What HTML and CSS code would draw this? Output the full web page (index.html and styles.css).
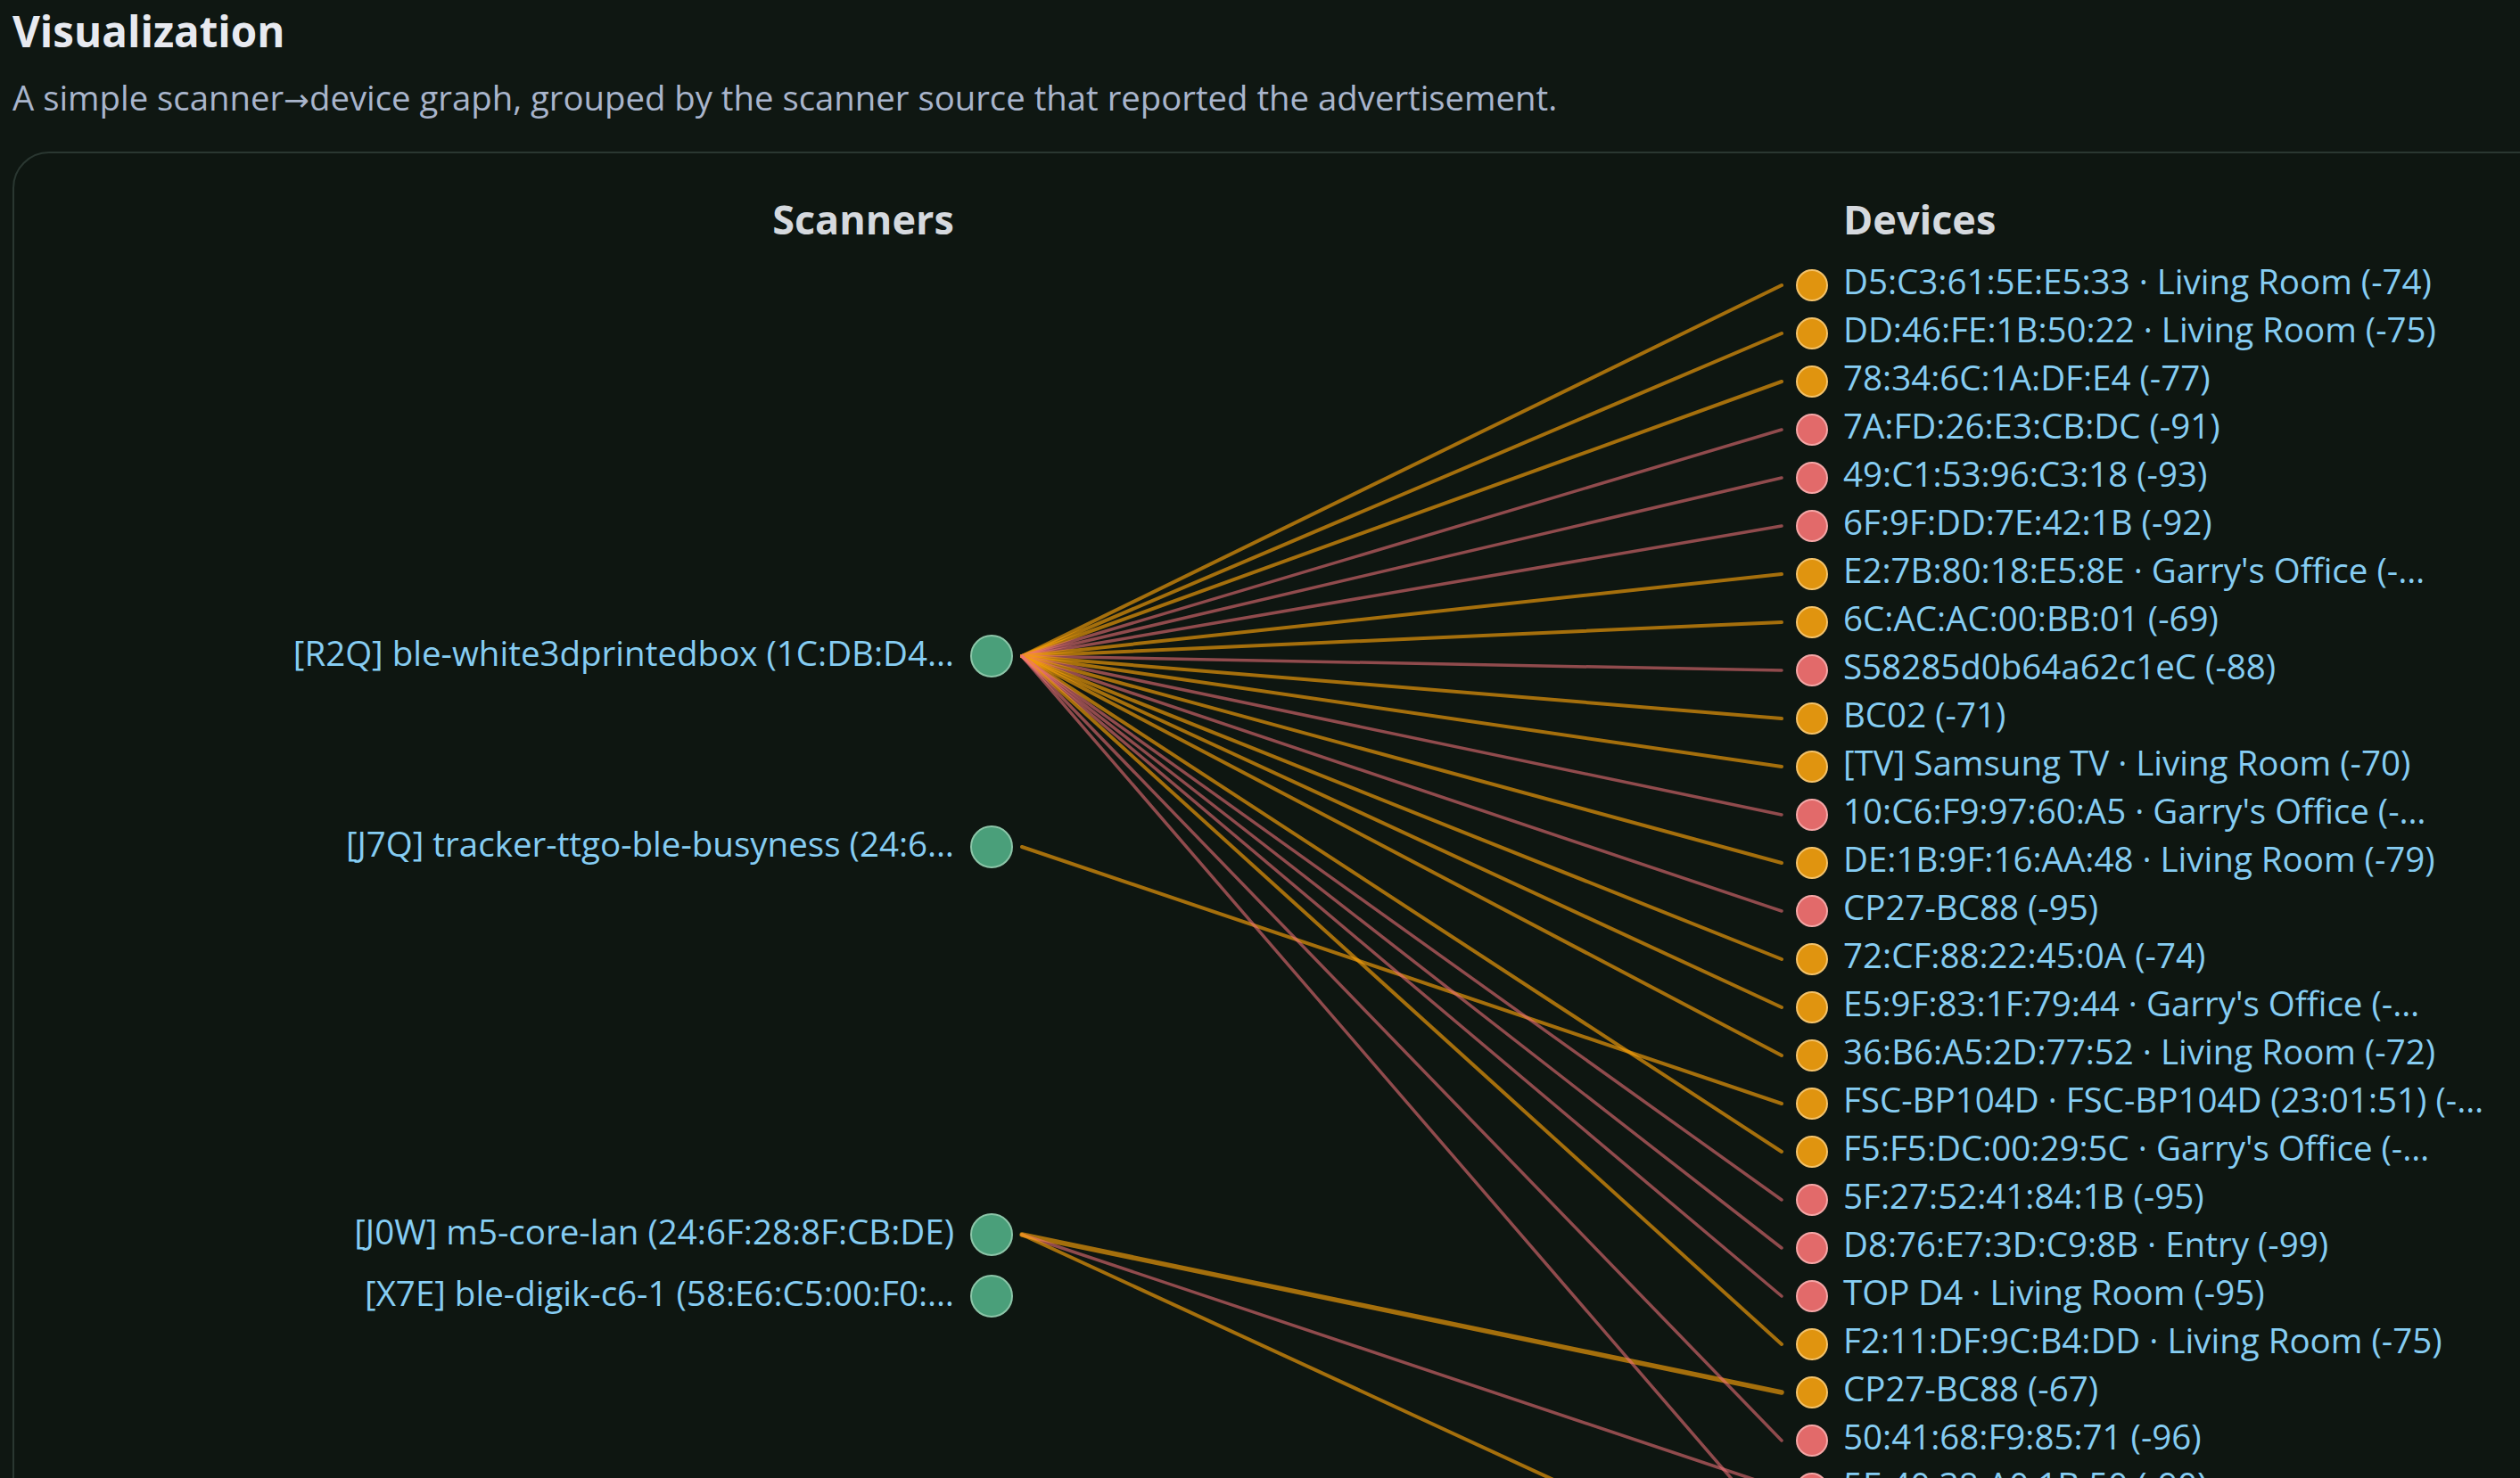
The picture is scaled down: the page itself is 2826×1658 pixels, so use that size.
FILE: index.html
```html
<!DOCTYPE html>
<html lang="en">
<head>
<meta charset="utf-8">
<title>Visualization</title>
<link rel="stylesheet" href="styles.css">
</head>
<body>
<main class="page">
  <h2 class="title">Visualization</h2>
  <p class="subtitle">A simple scanner<span class="arrow">→</span>device graph, grouped by the scanner source that reported the advertisement.</p>
  <section class="card">
    <svg class="graph" width="2900" height="1700" viewBox="16 172 2900 1700" xmlns="http://www.w3.org/2000/svg">
      <text class="hdr" x="968" y="263" text-anchor="middle">Scanners</text>
      <text class="hdr" x="2067" y="263">Devices</text>

      <g class="edges">
        <line class="edge-o" x1="1146" y1="736" x2="1998" y2="320"/>
        <line class="edge-o" x1="1146" y1="736" x2="1998" y2="374"/>
        <line class="edge-o" x1="1146" y1="736" x2="1998" y2="428"/>
        <line class="edge-r" x1="1146" y1="736" x2="1998" y2="482"/>
        <line class="edge-r" x1="1146" y1="736" x2="1998" y2="536"/>
        <line class="edge-r" x1="1146" y1="736" x2="1998" y2="590"/>
        <line class="edge-o" x1="1146" y1="736" x2="1998" y2="644"/>
        <line class="edge-o" x1="1146" y1="736" x2="1998" y2="698"/>
        <line class="edge-r" x1="1146" y1="736" x2="1998" y2="752"/>
        <line class="edge-o" x1="1146" y1="736" x2="1998" y2="806"/>
        <line class="edge-o" x1="1146" y1="736" x2="1998" y2="860"/>
        <line class="edge-r" x1="1146" y1="736" x2="1998" y2="914"/>
        <line class="edge-o" x1="1146" y1="736" x2="1998" y2="968"/>
        <line class="edge-r" x1="1146" y1="736" x2="1998" y2="1022"/>
        <line class="edge-o" x1="1146" y1="736" x2="1998" y2="1076"/>
        <line class="edge-o" x1="1146" y1="736" x2="1998" y2="1130"/>
        <line class="edge-o" x1="1146" y1="736" x2="1998" y2="1184"/>
        <line class="edge-o" x1="1146" y1="950" x2="1998" y2="1238"/>
        <line class="edge-o" x1="1146" y1="736" x2="1998" y2="1292"/>
        <line class="edge-r" x1="1146" y1="736" x2="1998" y2="1346"/>
        <line class="edge-r" x1="1146" y1="736" x2="1998" y2="1400"/>
        <line class="edge-r" x1="1146" y1="736" x2="1998" y2="1454"/>
        <line class="edge-o" x1="1146" y1="736" x2="1998" y2="1508"/>
        <line class="edge-o edge-strong" x1="1146" y1="1385" x2="1998" y2="1562"/>
        <line class="edge-r" x1="1146" y1="736" x2="1998" y2="1616"/>
        <line class="edge-r" x1="1146" y1="1385" x2="1998" y2="1670"/>
        <line class="edge-r" x1="1146" y1="736" x2="1998" y2="1724"/>
        <line class="edge-o" x1="1146" y1="1385" x2="1998" y2="1778"/>
      </g>

      <g class="scanners">
        <circle class="node-s" cx="1112" cy="736" r="23"/>
        <text class="slabel" x="1070" y="747" text-anchor="end">[R2Q] ble-white3dprintedbox (1C:DB:D4…</text>
        <circle class="node-s" cx="1112" cy="950" r="23"/>
        <text class="slabel" x="1070" y="961" text-anchor="end">[J7Q] tracker-ttgo-ble-busyness (24:6…</text>
        <circle class="node-s" cx="1112" cy="1385" r="23"/>
        <text class="slabel" x="1070" y="1396" text-anchor="end">[J0W] m5-core-lan (24:6F:28:8F:CB:DE)</text>
        <circle class="node-s" cx="1112" cy="1454" r="23"/>
        <text class="slabel" x="1070" y="1465" text-anchor="end">[X7E] ble-digik-c6-1 (58:E6:C5:00:F0:…</text>
      </g>

      <g class="devices">
        <circle class="node-o" cx="2032" cy="320" r="17"/><text class="dlabel" x="2067" y="330">D5:C3:61:5E:E5:33 · Living Room (-74)</text>
        <circle class="node-o" cx="2032" cy="374" r="17"/><text class="dlabel" x="2067" y="384">DD:46:FE:1B:50:22 · Living Room (-75)</text>
        <circle class="node-o" cx="2032" cy="428" r="17"/><text class="dlabel" x="2067" y="438">78:34:6C:1A:DF:E4 (-77)</text>
        <circle class="node-r" cx="2032" cy="482" r="17"/><text class="dlabel" x="2067" y="492">7A:FD:26:E3:CB:DC (-91)</text>
        <circle class="node-r" cx="2032" cy="536" r="17"/><text class="dlabel" x="2067" y="546">49:C1:53:96:C3:18 (-93)</text>
        <circle class="node-r" cx="2032" cy="590" r="17"/><text class="dlabel" x="2067" y="600">6F:9F:DD:7E:42:1B (-92)</text>
        <circle class="node-o" cx="2032" cy="644" r="17"/><text class="dlabel" x="2067" y="654">E2:7B:80:18:E5:8E · Garry's Office (-…</text>
        <circle class="node-o" cx="2032" cy="698" r="17"/><text class="dlabel" x="2067" y="708">6C:AC:AC:00:BB:01 (-69)</text>
        <circle class="node-r" cx="2032" cy="752" r="17"/><text class="dlabel" x="2067" y="762">S58285d0b64a62c1eC (-88)</text>
        <circle class="node-o" cx="2032" cy="806" r="17"/><text class="dlabel" x="2067" y="816">BC02 (-71)</text>
        <circle class="node-o" cx="2032" cy="860" r="17"/><text class="dlabel" x="2067" y="870">[TV] Samsung TV · Living Room (-70)</text>
        <circle class="node-r" cx="2032" cy="914" r="17"/><text class="dlabel" x="2067" y="924">10:C6:F9:97:60:A5 · Garry's Office (-…</text>
        <circle class="node-o" cx="2032" cy="968" r="17"/><text class="dlabel" x="2067" y="978">DE:1B:9F:16:AA:48 · Living Room (-79)</text>
        <circle class="node-r" cx="2032" cy="1022" r="17"/><text class="dlabel" x="2067" y="1032">CP27-BC88 (-95)</text>
        <circle class="node-o" cx="2032" cy="1076" r="17"/><text class="dlabel" x="2067" y="1086">72:CF:88:22:45:0A (-74)</text>
        <circle class="node-o" cx="2032" cy="1130" r="17"/><text class="dlabel" x="2067" y="1140">E5:9F:83:1F:79:44 · Garry's Office (-…</text>
        <circle class="node-o" cx="2032" cy="1184" r="17"/><text class="dlabel" x="2067" y="1194">36:B6:A5:2D:77:52 · Living Room (-72)</text>
        <circle class="node-o" cx="2032" cy="1238" r="17"/><text class="dlabel" x="2067" y="1248">FSC-BP104D · FSC-BP104D (23:01:51) (-…</text>
        <circle class="node-o" cx="2032" cy="1292" r="17"/><text class="dlabel" x="2067" y="1302">F5:F5:DC:00:29:5C · Garry's Office (-…</text>
        <circle class="node-r" cx="2032" cy="1346" r="17"/><text class="dlabel" x="2067" y="1356">5F:27:52:41:84:1B (-95)</text>
        <circle class="node-r" cx="2032" cy="1400" r="17"/><text class="dlabel" x="2067" y="1410">D8:76:E7:3D:C9:8B · Entry (-99)</text>
        <circle class="node-r" cx="2032" cy="1454" r="17"/><text class="dlabel" x="2067" y="1464">TOP D4 · Living Room (-95)</text>
        <circle class="node-o" cx="2032" cy="1508" r="17"/><text class="dlabel" x="2067" y="1518">F2:11:DF:9C:B4:DD · Living Room (-75)</text>
        <circle class="node-o" cx="2032" cy="1562" r="17"/><text class="dlabel" x="2067" y="1572">CP27-BC88 (-67)</text>
        <circle class="node-r" cx="2032" cy="1616" r="17"/><text class="dlabel" x="2067" y="1626">50:41:68:F9:85:71 (-96)</text>
        <circle class="node-r" cx="2032" cy="1670" r="17"/><text class="dlabel" x="2067" y="1680">5E:40:38:A0:1B:50 (-90)</text>
        <circle class="node-r" cx="2032" cy="1724" r="17"/><text class="dlabel" x="2067" y="1734">C4:7F:51:0A:2E:93 (-93)</text>
        <circle class="node-o" cx="2032" cy="1778" r="17"/><text class="dlabel" x="2067" y="1788">A8:03:2A:6B:11:F0 (-78)</text>
      </g>
    </svg>
  </section>
</main>
</body>
</html>
```
FILE: styles.css
```css
html, body {
  margin: 0;
  padding: 0;
  background: #0f1712;
  overflow: hidden;
}

.page {
  padding: 7px 0 0 14px;
  font-family: "Open Sans", "Noto Sans", "Liberation Sans", sans-serif;
}

.title {
  margin: 0;
  font-size: 47.5px;
  line-height: 56px;
  font-weight: 700;
  color: #e8eaf0;
  letter-spacing: 0;
}

.subtitle {
  margin: 21px 0 0 0;
  font-size: 38.3px;
  line-height: 50px;
  color: #a9b5cc;
  white-space: nowrap;
}

.arrow {
  font-family: "DejaVu Sans", sans-serif;
  font-size: 0.9em;
  line-height: 0;
}

.card {
  margin-top: 36px;
  width: 2900px;
  height: 1700px;
  border: 2px solid #2a3731;
  border-radius: 41px;
  background: #0e1611;
  overflow: hidden;
}

.graph {
  display: block;
}

.hdr {
  font-family: "Open Sans", "Noto Sans", sans-serif;
  font-weight: 700;
  font-size: 45px;
  fill: #d5d9de;
}

.slabel,
.dlabel {
  font-family: "Open Sans", "Noto Sans", sans-serif;
  font-size: 38.5px;
  fill: #86cdf3;
}

.edge-o {
  stroke: #f59e0b;
  stroke-opacity: 0.66;
  stroke-width: 4;
  stroke-linecap: round;
}

.edge-r {
  stroke: #f07178;
  stroke-opacity: 0.58;
  stroke-width: 3.5;
  stroke-linecap: round;
}

.edge-strong {
  stroke-width: 5.5;
}

.node-s {
  fill: #4a9f7a;
  stroke: #8cc5a8;
  stroke-width: 2;
}

.node-o {
  fill: #e0940f;
  stroke: #f3c26a;
  stroke-width: 2;
}

.node-r {
  fill: #e26a6a;
  stroke: #f4a6a6;
  stroke-width: 2;
}
```
